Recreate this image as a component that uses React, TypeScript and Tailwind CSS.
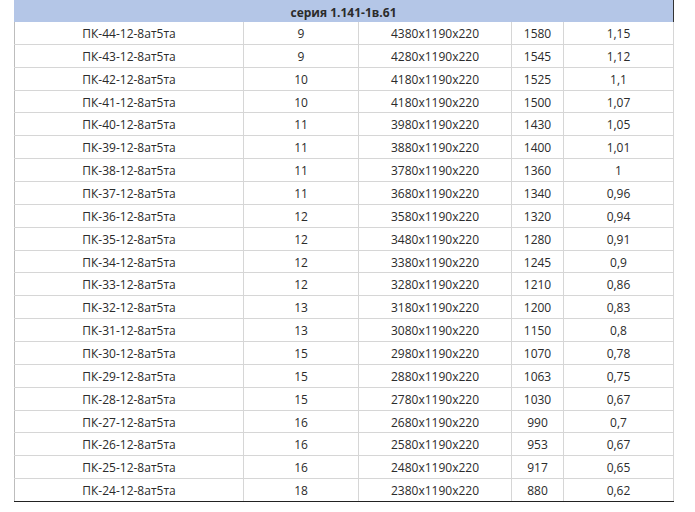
import React from "react";

const rows: [string, string, string, string, string][] = [
  ["ПК-44-12-8ат5та", "9", "4380x1190x220", "1580", "1,15"],
  ["ПК-43-12-8ат5та", "9", "4280x1190x220", "1545", "1,12"],
  ["ПК-42-12-8ат5та", "10", "4180x1190x220", "1525", "1,1"],
  ["ПК-41-12-8ат5та", "10", "4180x1190x220", "1500", "1,07"],
  ["ПК-40-12-8ат5та", "11", "3980x1190x220", "1430", "1,05"],
  ["ПК-39-12-8ат5та", "11", "3880x1190x220", "1400", "1,01"],
  ["ПК-38-12-8ат5та", "11", "3780x1190x220", "1360", "1"],
  ["ПК-37-12-8ат5та", "11", "3680x1190x220", "1340", "0,96"],
  ["ПК-36-12-8ат5та", "12", "3580x1190x220", "1320", "0,94"],
  ["ПК-35-12-8ат5та", "12", "3480x1190x220", "1280", "0,91"],
  ["ПК-34-12-8ат5та", "12", "3380x1190x220", "1245", "0,9"],
  ["ПК-33-12-8ат5та", "12", "3280x1190x220", "1210", "0,86"],
  ["ПК-32-12-8ат5та", "13", "3180x1190x220", "1200", "0,83"],
  ["ПК-31-12-8ат5та", "13", "3080x1190x220", "1150", "0,8"],
  ["ПК-30-12-8ат5та", "15", "2980x1190x220", "1070", "0,78"],
  ["ПК-29-12-8ат5та", "15", "2880x1190x220", "1063", "0,75"],
  ["ПК-28-12-8ат5та", "15", "2780x1190x220", "1030", "0,67"],
  ["ПК-27-12-8ат5та", "16", "2680x1190x220", "990", "0,7"],
  ["ПК-26-12-8ат5та", "16", "2580x1190x220", "953", "0,67"],
  ["ПК-25-12-8ат5та", "16", "2480x1190x220", "917", "0,65"],
  ["ПК-24-12-8ат5та", "18", "2380x1190x220", "880", "0,62"],
];

export default function App() {
  return (
    <div
      className="w-[695px] h-[512px] bg-white text-[#2b2b2b] text-[12px] overflow-hidden"
      style={{ fontFamily: '"Open Sans", "Noto Sans", sans-serif' }}
    >
      <div className="ml-[14px] w-[660px]">
        <div className="h-[22px] pt-[3px] bg-[#b4c6e7] border-r border-[#333333] flex items-center justify-center font-bold">
          серия 1.141-1в.61
        </div>
        {rows.map((r, i) => (
          <div
            key={i}
            className={`flex h-[22.86px] pt-[2px] border-b ${
              i === rows.length - 1 ? "border-[#222222]" : "border-[#d6d6d6]"
            }`}
          >
            <div className="w-[229px] -mt-[2px] pt-[2px] border-l border-[#bdbdbd] flex items-center justify-center">
              {r[0]}
            </div>
            <div className="w-[115px] -mt-[2px] pt-[2px] border-l border-[#d6d6d6] flex items-center justify-center">
              {r[1]}
            </div>
            <div className="w-[153px] -mt-[2px] pt-[2px] border-l border-[#d6d6d6] flex items-center justify-center">
              {r[2]}
            </div>
            <div className="w-[52px] -mt-[2px] pt-[2px] border-l border-[#d6d6d6] flex items-center justify-center">
              {r[3]}
            </div>
            <div className="w-[111px] -mt-[2px] pt-[2px] border-l border-r border-[#d6d6d6] flex items-center justify-center">
              {r[4]}
            </div>
          </div>
        ))}
      </div>
    </div>
  );
}
